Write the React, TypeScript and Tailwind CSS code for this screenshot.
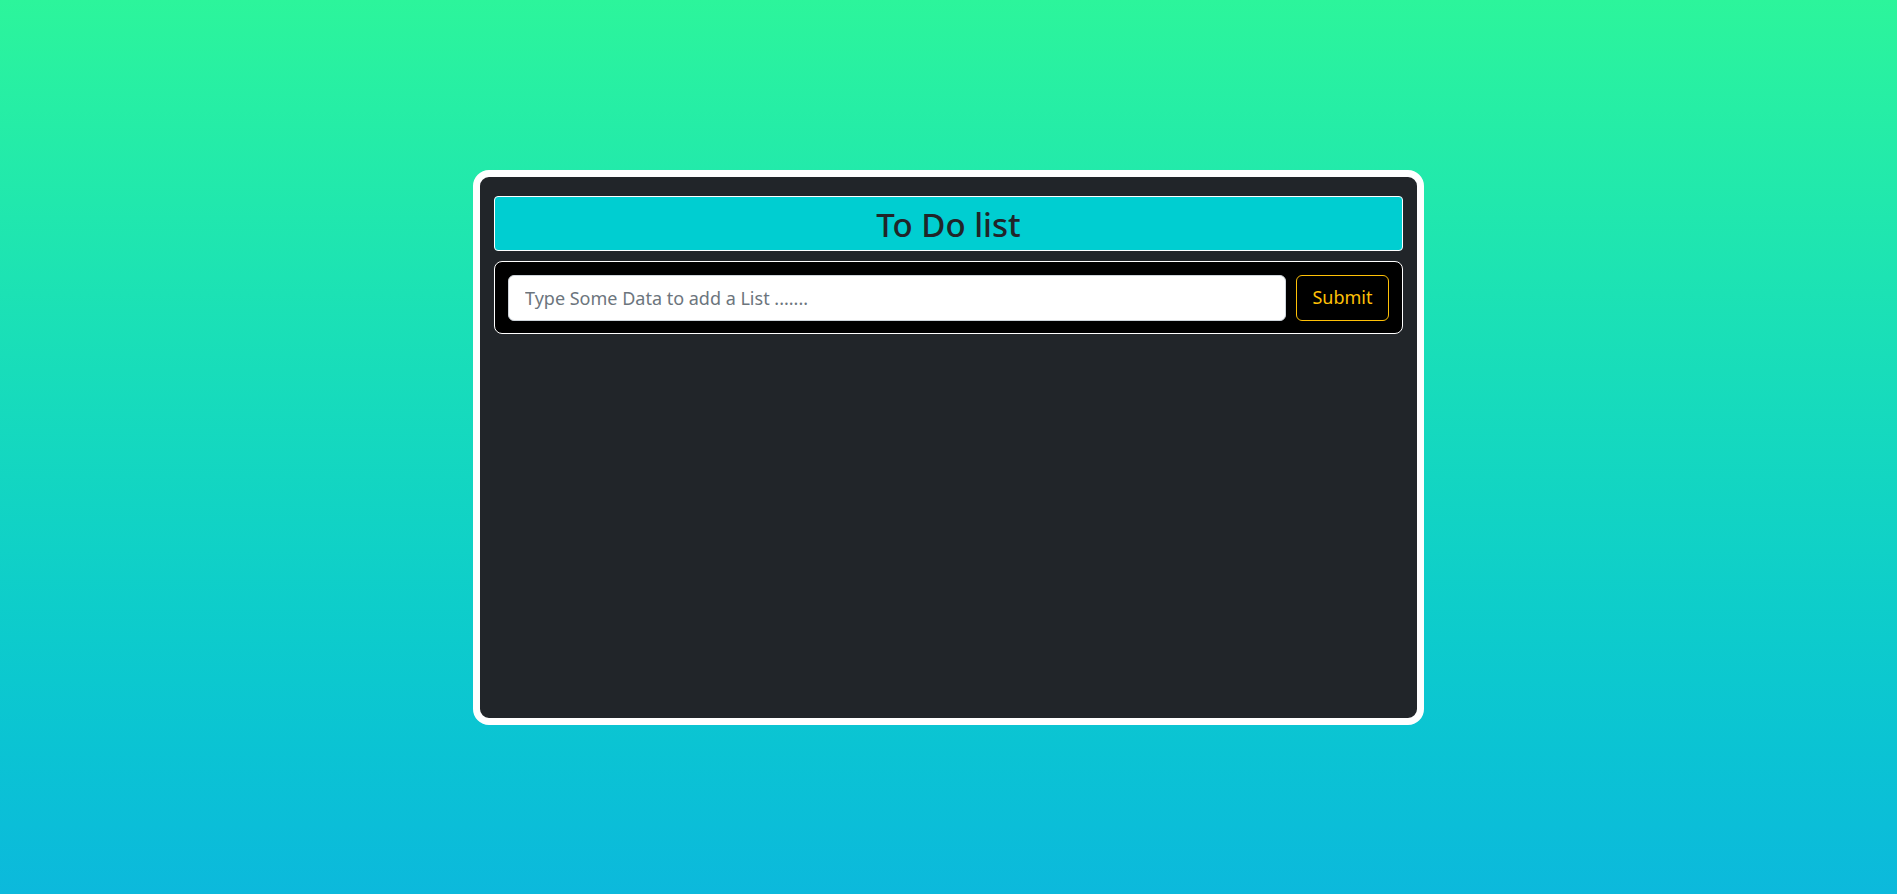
export default function App() {
  return (
    <div className="flex h-screen w-full items-center justify-center bg-gradient-to-b from-[#2cf59b] to-[#0cb9dc] font-['Noto_Sans',sans-serif]">
      {/* card */}
      <div className="flex h-[555px] w-[951px] flex-col rounded-[16px] border-[7px] border-white bg-[#212529] px-[14px] pt-[19px]">
        <div className="flex h-[55px] items-center justify-center rounded-[4px] border border-white bg-[#00ced1]">
          <h2 className="pt-[2px] text-[33px] font-medium leading-none text-[#212529]">To Do list</h2>
        </div>

        <form
          className="mt-[10px] flex h-[73px] items-center gap-[10px] rounded-[8px] border border-white bg-black px-[13px] pt-[1px]"
          onSubmit={(e) => e.preventDefault()}
        >
          <input
            type="text"
            placeholder="Type Some Data to add a List ......."
            className="h-[46px] flex-1 rounded-[6px] border border-[#ced4da] bg-white px-[16px] text-[18px] text-[#212529] outline-none placeholder:text-[#6c757d]"
          />
          <button
            type="submit"
            className="h-[46px] w-[93px] rounded-[6px] border border-[#ffc107] bg-transparent text-[18px] text-[#ffc107]"
          >
            Submit
          </button>
        </form>
      </div>
    </div>
  )
}
